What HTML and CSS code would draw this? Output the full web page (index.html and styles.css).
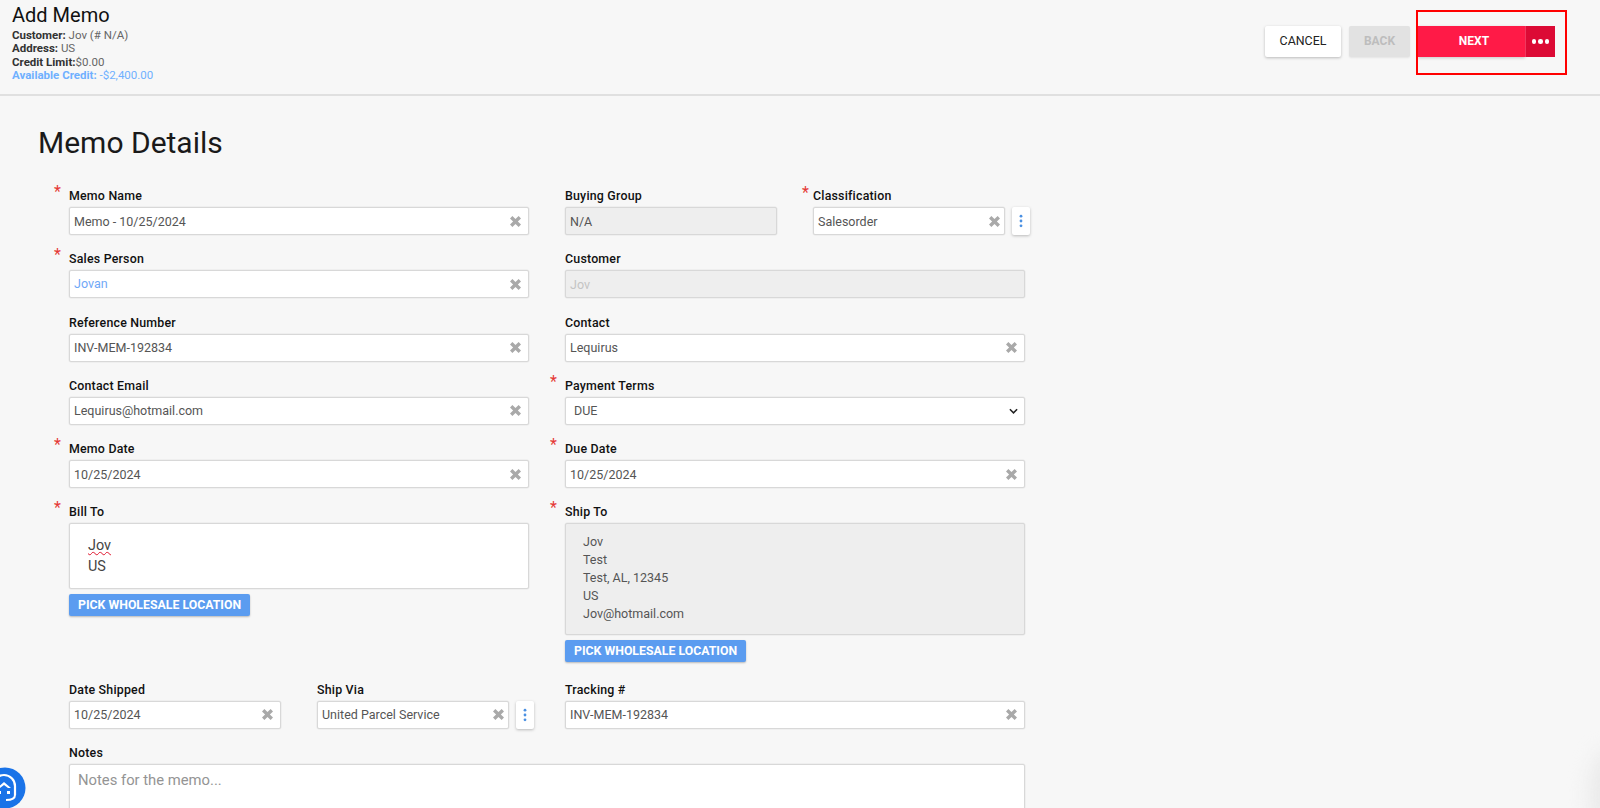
FILE: index.html
```html
<!DOCTYPE html>
<html lang="en">
<head>
<meta charset="utf-8">
<title>Add Memo</title>
<link rel="stylesheet" href="styles.css">
</head>
<body>
<svg class="defs" width="0" height="0" aria-hidden="true">
  <symbol id="x" viewBox="0 0 12 12"><path d="M2.6 0 6 3.4 9.4 0 12 2.6 8.6 6 12 9.4 9.4 12 6 8.6 2.6 12 0 9.4 3.4 6 0 2.6z" fill="#a9a9a9"/></symbol>
  <symbol id="kebab" viewBox="0 0 4 14"><circle cx="2" cy="2.2" r="1.4" fill="#4a90e2"/><circle cx="2" cy="7" r="1.4" fill="#4a90e2"/><circle cx="2" cy="11.8" r="1.4" fill="#4a90e2"/></symbol>
</svg>
<header class="topbar">
  <div class="summary">
    <h1 class="page-title">Add Memo</h1>
    <div class="info"><b>Customer:</b> Jov (# N/A)</div>
    <div class="info"><b>Address:</b> US</div>
    <div class="info"><b>Credit Limit:</b>$0.00</div>
    <div class="info info-blue"><b>Available Credit:</b> -$2,400.00</div>
  </div>
  <div class="actions">
    <button class="btn btn-cancel">CANCEL</button>
    <button class="btn btn-back">BACK</button>
    <div class="split">
      <button class="btn btn-next">NEXT</button>
      <button class="btn btn-more"><span class="dot"></span><span class="dot"></span><span class="dot"></span></button>
    </div>
  </div>
  <div class="highlight"></div>
</header>
<main class="content">
  <h2 class="section-title">Memo Details</h2>
  <form class="form-grid">
    <div class="field span2"><label class="lbl req">Memo Name</label><div class="input"><span class="val">Memo - 10/25/2024</span><svg class="clear"><use href="#x"/></svg></div></div>
    <div class="field"><label class="lbl">Buying Group</label><div class="input disabled"><span class="val">N/A</span></div></div>
    <div class="field"><label class="lbl req req-near">Classification</label><div class="with-menu"><div class="input"><span class="val">Salesorder</span><svg class="clear"><use href="#x"/></svg></div><button type="button" class="menu-btn"><svg class="kebab"><use href="#kebab"/></svg></button></div></div>

    <div class="field span2"><label class="lbl req">Sales Person</label><div class="input"><span class="val val-link">Jovan</span><svg class="clear"><use href="#x"/></svg></div></div>
    <div class="field span2"><label class="lbl">Customer</label><div class="input disabled"><span class="val val-muted">Jov</span></div></div>

    <div class="field span2"><label class="lbl">Reference Number</label><div class="input"><span class="val">INV-MEM-192834</span><svg class="clear"><use href="#x"/></svg></div></div>
    <div class="field span2"><label class="lbl">Contact</label><div class="input"><span class="val">Lequirus</span><svg class="clear"><use href="#x"/></svg></div></div>

    <div class="field span2"><label class="lbl">Contact Email</label><div class="input"><span class="val">Lequirus@hotmail.com</span><svg class="clear"><use href="#x"/></svg></div></div>
    <div class="field span2"><label class="lbl req">Payment Terms</label><div class="input select"><span class="val">DUE</span><svg class="chev" viewBox="0 0 10 6"><path d="M1 1l4 4 4-4" fill="none" stroke="#222" stroke-width="1.7"/></svg></div></div>

    <div class="field span2"><label class="lbl req">Memo Date</label><div class="input"><span class="val">10/25/2024</span><svg class="clear"><use href="#x"/></svg></div></div>
    <div class="field span2"><label class="lbl req">Due Date</label><div class="input"><span class="val">10/25/2024</span><svg class="clear"><use href="#x"/></svg></div></div>

    <div class="field span2"><label class="lbl req">Bill To</label>
      <div class="address bill"><span class="spell">Jov</span><br>US</div>
      <button type="button" class="pick">PICK WHOLESALE LOCATION</button>
    </div>
    <div class="field span2"><label class="lbl req">Ship To</label>
      <div class="address ship">Jov<br>Test<br>Test, AL, 12345<br>US<br>Jov@hotmail.com</div>
      <button type="button" class="pick">PICK WHOLESALE LOCATION</button>
    </div>

    <div class="field after-address"><label class="lbl">Date Shipped</label><div class="input"><span class="val">10/25/2024</span><svg class="clear"><use href="#x"/></svg></div></div>
    <div class="field after-address"><label class="lbl">Ship Via</label><div class="with-menu"><div class="input"><span class="val">United Parcel Service</span><svg class="clear"><use href="#x"/></svg></div><button type="button" class="menu-btn"><svg class="kebab"><use href="#kebab"/></svg></button></div></div>
    <div class="field span2 after-address"><label class="lbl">Tracking #</label><div class="input"><span class="val">INV-MEM-192834</span><svg class="clear"><use href="#x"/></svg></div></div>

    <div class="field span4"><label class="lbl">Notes</label><div class="notes">Notes for the memo...</div></div>
  </form>
</main>
<div class="chat">
  <svg viewBox="0 0 42 42" width="42" height="42">
    <circle cx="21" cy="21" r="20.5" fill="#1a73e8"/>
    <path d="M9 28v-9a11 11 0 0 1 22 0v9" fill="none" stroke="#fff" stroke-width="2.2"/>
    <path d="M31 28c0 4-3 5-9 5" fill="none" stroke="#fff" stroke-width="2"/>
    <path d="M20 15l-7 6h3l4-3 4 3h3z" fill="#fff"/>
    <path d="M14 24h3v3h-3zM23 24h3v3h-3z" fill="#fff"/>
  </svg>
</div>
<div class="corner-glow"></div>
</body>
</html>
```
FILE: styles.css
```css
* { box-sizing: border-box; }
html, body { margin: 0; height: 808px; overflow: hidden; }
body { background: #f7f7f7; font-family: Roboto, "Liberation Sans", sans-serif; color: #212529; position: relative; }
.defs { position: absolute; }

.topbar { display: flex; justify-content: space-between; align-items: flex-start; height: 96px; padding: 3px 45px 0 12px; border-bottom: 2px solid #e0e0e0; position: relative; }
.page-title { margin: 0 0 1px; font-size: 20px; line-height: 25px; font-weight: 400; color: #111; }
.info { font-size: 11.5px; line-height: 13.3px; color: #666; }
.info b { font-weight: 700; color: #333; }
.info-blue, .info-blue b { color: #6fb0ff; }

.actions { display: flex; gap: 8px; margin-top: 23px; }
.btn { border: 0; height: 31px; font-family: inherit; font-size: 12px; font-weight: 500; padding: 0 0 2px; border-radius: 2px; }
.btn-cancel { width: 76px; background: #fff; color: #222; font-size: 12.4px; font-weight: 400; box-shadow: 0 1px 3px rgba(0,0,0,.25); }
.btn-back { width: 61px; background: #e2e2e2; color: #bdbdbd; font-weight: 700; box-shadow: 0 1px 2px rgba(0,0,0,.08); }
.split { display: flex; }
.btn-next { width: 107px; background: #ff1a47; color: #fff; font-weight: 700; border-radius: 0; padding-left: 5px; box-shadow: 0 1px 3px rgba(0,0,0,.2); }
.btn-more { width: 30px; background: #dc0a35; display: flex; align-items: center; justify-content: center; gap: 2px; border-radius: 0; padding: 0; border-left: 1px solid #f0385f; }
.dot { width: 4.5px; height: 4.5px; border-radius: 50%; background: #fff; }
.highlight { position: absolute; left: 1416px; top: 10px; width: 151px; height: 65px; border: 2px solid #ff0000; }

.content { padding: 0 0 0 38px; }
.section-title { margin: 29px 0 0; font-size: 30px; line-height: 36px; font-weight: 400; color: #1a1a1a; }

.form-grid { display: grid; grid-template-columns: repeat(4, 212px); column-gap: 36px; row-gap: 17.3px; margin: 28px 0 0 31px; }
.span2 { grid-column: span 2; }
.span4 { grid-column: span 4; }
.after-address { margin-top: 3px; }

.lbl { display: block; position: relative; height: 18px; font-size: 12.4px; line-height: 13px; font-weight: 500; color: #111; letter-spacing: .2px; }
.req::before { content: "*"; position: absolute; left: -15px; top: -5px; color: #e53935; font-size: 16px; line-height: 16px; font-weight: 400; letter-spacing: 0; }
.req-near::before { left: -11px; top: -4px; }

.input { display: flex; align-items: center; justify-content: space-between; height: 28px; padding: 0 7px 0 4px; background: #fff; border: 1px solid #d8d8d8; box-shadow: 0 0 0 .5px #e8e8e8; border-radius: 2px; font-size: 12.5px; color: #555; flex: 1; min-width: 0; }
.disabled { background: #eee; }
.select { padding-left: 8px; padding-right: 6px; }
.val-link { color: #6fa8f7; position: relative; top: -1px; }
.val-muted { color: #c4c4c4; }
.clear { width: 11px; height: 11px; flex: none; }
.chev { width: 9px; height: 6px; flex: none; }

.with-menu { display: flex; gap: 7px; margin-right: -5px; }
.with-menu .input { padding-right: 4px; }
.menu-btn { flex: none; width: 18px; height: 28px; padding: 0; border: 0; background: #fff; border-radius: 2px; box-shadow: 0 1px 3px rgba(0,0,0,.25); display: flex; align-items: center; justify-content: center; }
.kebab { width: 4px; height: 14px; }

.address { border: 1px solid #d8d8d8; border-radius: 2px; box-shadow: 0 0 0 .5px #e8e8e8; }
.bill { height: 66px; background: #fff; padding: 11px 18px; font-size: 14.4px; line-height: 21px; color: #444; }
.ship { height: 112px; background: #eee; padding: 9px 17px; font-size: 12.5px; line-height: 18px; color: #555; }
.spell { text-decoration: underline wavy #e0162e 1px; text-underline-offset: 1px; }
.pick { display: block; margin-top: 5px; height: 22px; padding: 0 9px; border: 0; border-radius: 2px; background: #5b9cf0; color: #fff; font-family: inherit; font-size: 12.3px; font-weight: 700; box-shadow: 0 1px 2px rgba(0,0,0,.25); }

.notes { height: 100px; background: #fff; border: 1px solid #d8d8d8; box-shadow: 0 0 0 .5px #e8e8e8; border-radius: 2px; padding: 5px 8px; font-size: 14.8px; line-height: 20px; color: #949494; }

.chat { position: absolute; left: -16px; top: 767px; width: 42px; height: 42px; }
.corner-glow { position: absolute; right: -30px; top: 750px; width: 40px; height: 90px; border-radius: 50%; background: #e9e9e9; filter: blur(10px); }
```
